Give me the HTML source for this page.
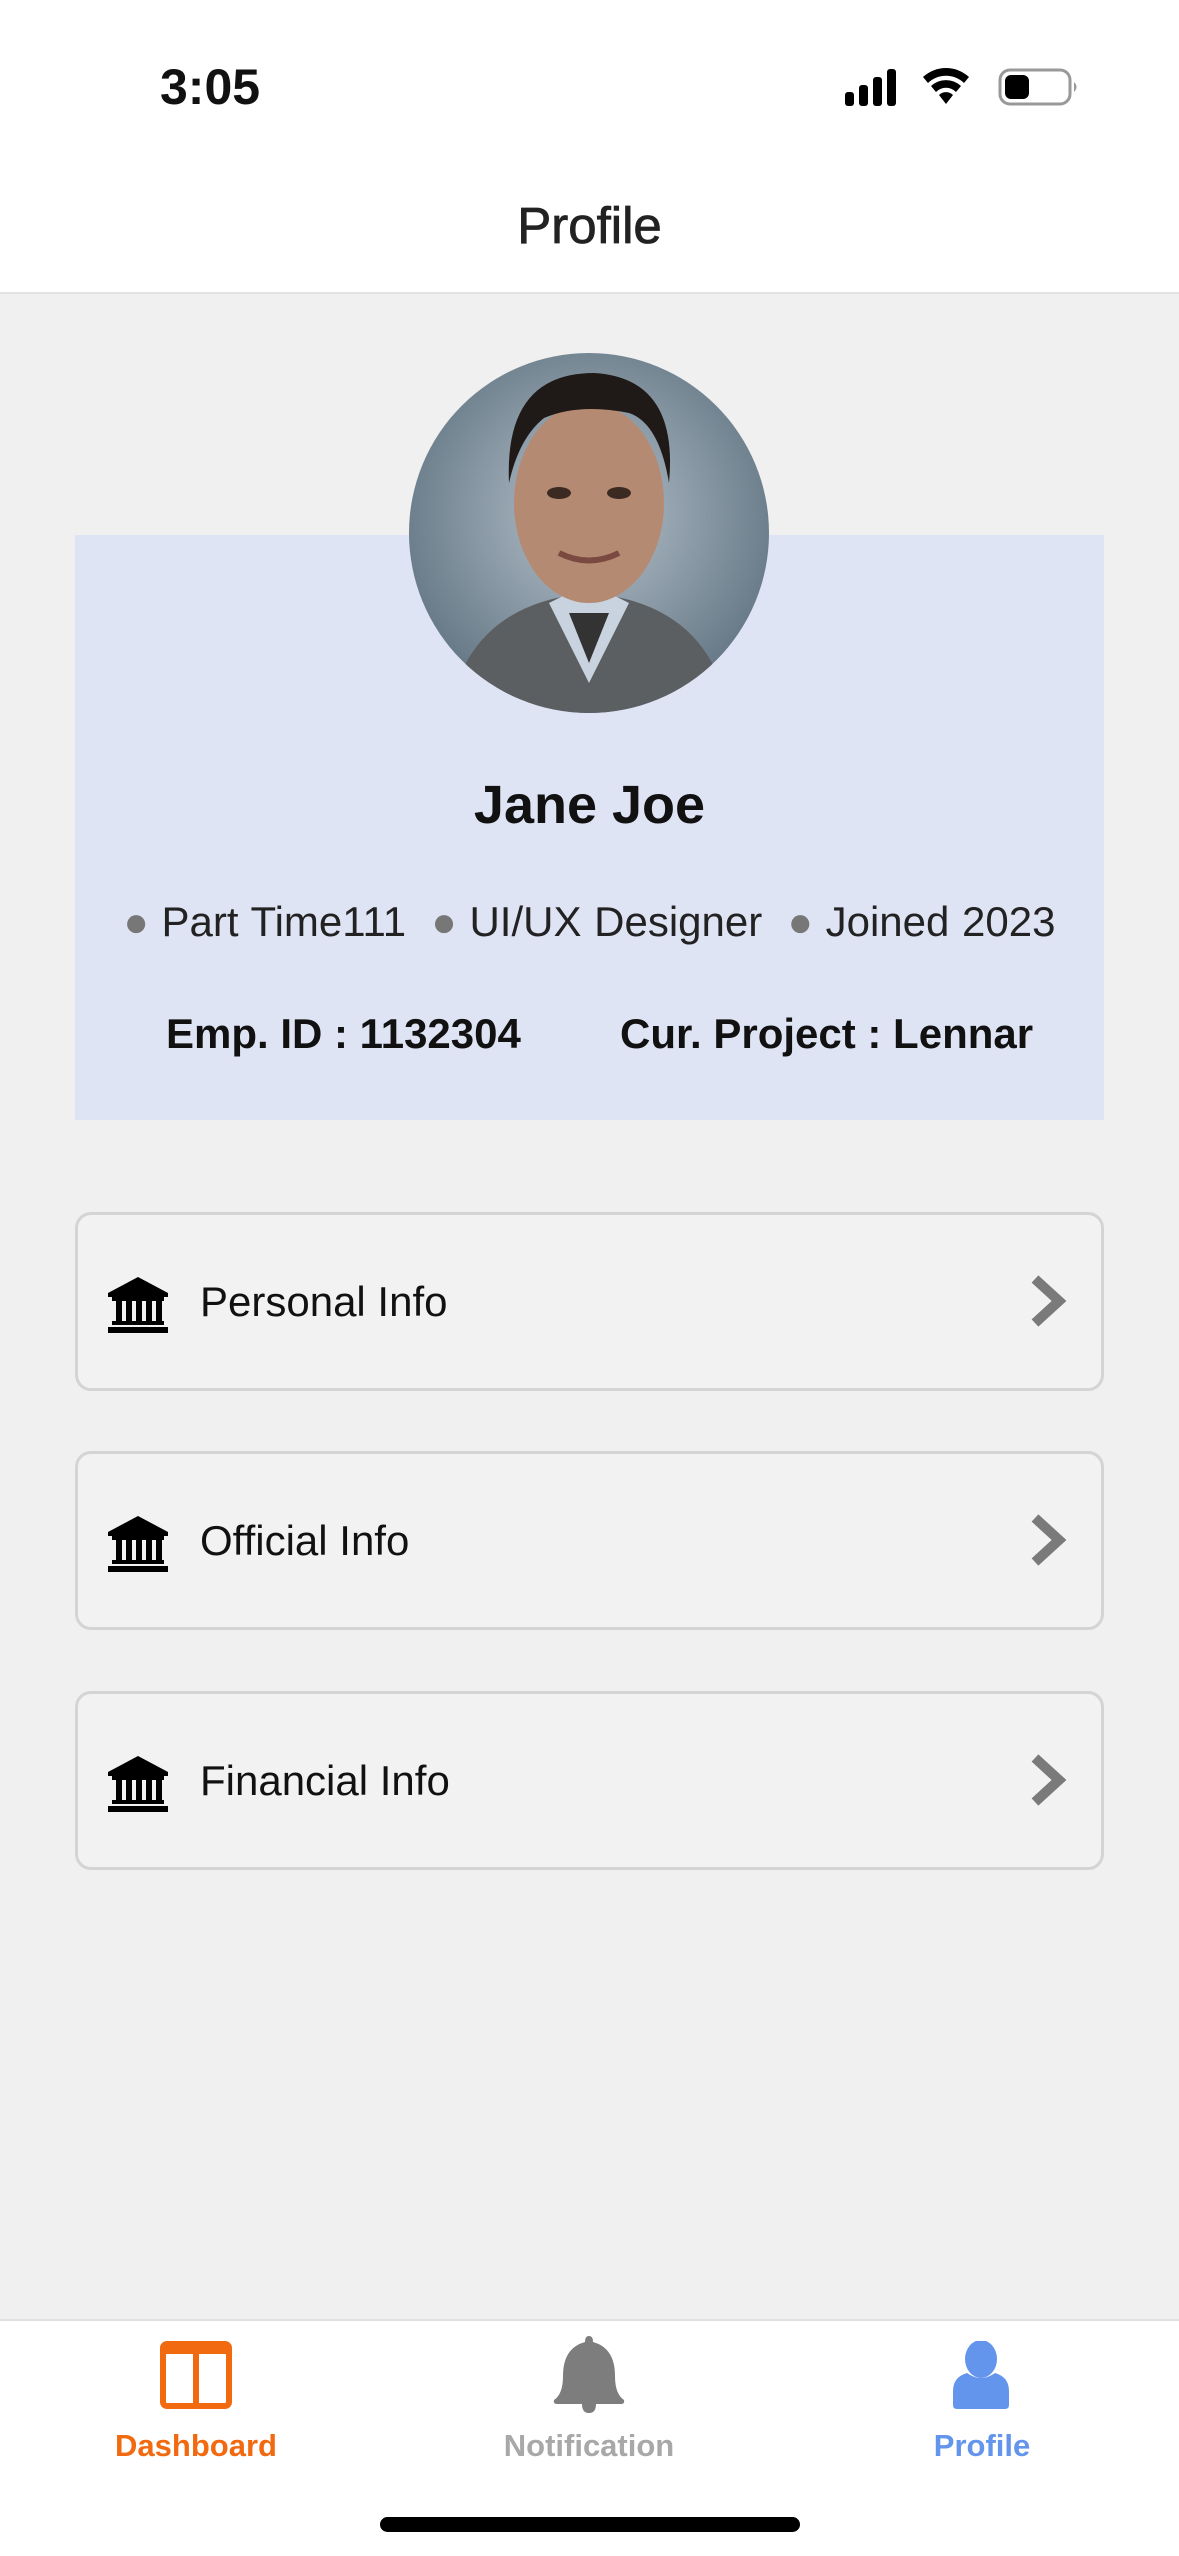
<!DOCTYPE html>
<html><head><meta charset="utf-8"><style>
*{margin:0;padding:0;box-sizing:border-box}
body{width:1179px;height:2556px;background:#f0f0f0;font-family:"Liberation Sans",sans-serif;position:relative;overflow:hidden;color:#111}
.abs{position:absolute}
.hdr{left:0;top:0;width:1179px;height:294px;background:#fff;border-bottom:2px solid #e2e2e2}
.card{left:75px;width:1029px;height:179px;border:3px solid #d4d4d4;border-radius:16px;background:#f2f2f2}
.card .t{position:absolute;left:122px;top:0;line-height:173px;font-size:42px;color:#111}
.card svg.i{position:absolute;left:30px;top:62px}
.card svg.c{position:absolute;left:950px;top:58px}
.tab{top:2319px;left:0;width:1179px;height:237px;background:#fff;border-top:2px solid #e0e0e0}
.lbl{position:absolute;top:2428px;font-size:31px;font-weight:bold;text-align:center;width:300px}
</style></head><body>
<div class="abs hdr"></div>
<div class="abs" style="left:160px;top:58px;font-size:50px;font-weight:bold;">3:05</div>
<svg class="abs" style="left:843px;top:68px" width="240" height="40" viewBox="0 0 240 40">
<rect x="2" y="24" width="9" height="14" rx="3"/><rect x="16" y="17" width="9" height="21" rx="3"/><rect x="30" y="9" width="9" height="29" rx="3"/><rect x="44" y="1" width="9" height="37" rx="3"/>
<path d="M80 9 a34 34 0 0 1 46 0 l-5 6 a26 26 0 0 0 -36 0z M88 18 a22 22 0 0 1 30 0 l-5 6 a14 14 0 0 0 -20 0z M96 27 a10 10 0 0 1 14 0 l-7 9z"/>
<rect x="157" y="2" width="70" height="34" rx="10" fill="none" stroke="#999" stroke-width="3"/>
<rect x="162" y="7" width="24" height="24" rx="6"/><path d="M231 14 q5 5 0 10z" fill="#999"/></svg>
<div class="abs" style="left:0;width:1179px;top:196px;text-align:center;font-size:51px;color:#222;-webkit-text-stroke:0.8px #222">Profile</div>

<div class="abs" style="left:75px;top:535px;width:1029px;height:585px;background:#dfe4f4"></div>
<svg class="abs" style="left:409px;top:353px" width="360" height="360" viewBox="0 0 360 360">
<defs><clipPath id="cp"><circle cx="180" cy="180" r="180"/></clipPath>
<radialGradient id="bg" cx="0.5" cy="0.45" r="0.6"><stop offset="0" stop-color="#b6c2cc"/><stop offset="1" stop-color="#5f7280"/></radialGradient></defs>
<g clip-path="url(#cp)"><rect width="360" height="360" fill="url(#bg)"/>
<path d="M40 360 q20 -110 140 -120 q120 10 140 120z" fill="#5c5f62"/>
<path d="M140 250 l40 80 l40 -80 l-20 -10 h-40z" fill="#c9d3e0"/>
<path d="M160 260 l20 50 l20 -50z" fill="#333"/>
<ellipse cx="180" cy="150" rx="75" ry="100" fill="#b58a72"/>
<path d="M100 130 q-5 -110 85 -110 q85 5 75 110 q-10 -60 -40 -70 q-50 -10 -85 5 q-25 20 -35 65z" fill="#1f1a17"/>
<ellipse cx="150" cy="140" rx="12" ry="6" fill="#3a2a22"/><ellipse cx="210" cy="140" rx="12" ry="6" fill="#3a2a22"/>
<path d="M150 200 q30 15 60 0" stroke="#7a4a40" stroke-width="6" fill="none"/></g></svg>
<div class="abs" style="left:0;width:1179px;top:774px;text-align:center;font-size:54px;font-weight:bold">Jane Joe</div>
<div class="abs" style="left:0;width:1179px;top:898px;text-align:center;font-size:42px;color:#222;word-spacing:1px">
<span style="color:#777">●</span> Part Time111 &nbsp;<span style="color:#777">●</span> UI/UX Designer &nbsp;<span style="color:#777">●</span> Joined 2023</div>
<div class="abs" style="left:166px;top:1010px;font-size:42px;font-weight:bold">Emp. ID : 1132304</div>
<div class="abs" style="left:620px;top:1010px;font-size:42px;font-weight:bold">Cur. Project : Lennar</div>

<div class="abs card" style="top:1212px"><svg class="i" width="60" height="56" viewBox="0 0 30 28"><path d="M15 0 L30 8 V10 H0 V8z"/><rect x="2" y="10" width="26" height="2"/><rect x="4" y="12" width="3" height="10"/><rect x="9" y="12" width="3" height="10"/><rect x="14" y="12" width="3" height="10"/><rect x="19" y="12" width="3" height="10"/><rect x="24" y="12" width="3" height="10"/><rect x="2" y="22" width="26" height="2"/><rect x="0" y="25" width="30" height="3"/></svg><div class="t">Personal Info</div><svg class="c" width="40" height="56" viewBox="0 0 40 56"><path d="M7 6 L31 28 L7 50" stroke="#7a7a7a" stroke-width="10" fill="none"/></svg></div>
<div class="abs card" style="top:1451px"><svg class="i" width="60" height="56" viewBox="0 0 30 28"><path d="M15 0 L30 8 V10 H0 V8z"/><rect x="2" y="10" width="26" height="2"/><rect x="4" y="12" width="3" height="10"/><rect x="9" y="12" width="3" height="10"/><rect x="14" y="12" width="3" height="10"/><rect x="19" y="12" width="3" height="10"/><rect x="24" y="12" width="3" height="10"/><rect x="2" y="22" width="26" height="2"/><rect x="0" y="25" width="30" height="3"/></svg><div class="t">Official Info</div><svg class="c" width="40" height="56" viewBox="0 0 40 56"><path d="M7 6 L31 28 L7 50" stroke="#7a7a7a" stroke-width="10" fill="none"/></svg></div>
<div class="abs card" style="top:1691px"><svg class="i" width="60" height="56" viewBox="0 0 30 28"><path d="M15 0 L30 8 V10 H0 V8z"/><rect x="2" y="10" width="26" height="2"/><rect x="4" y="12" width="3" height="10"/><rect x="9" y="12" width="3" height="10"/><rect x="14" y="12" width="3" height="10"/><rect x="19" y="12" width="3" height="10"/><rect x="24" y="12" width="3" height="10"/><rect x="2" y="22" width="26" height="2"/><rect x="0" y="25" width="30" height="3"/></svg><div class="t">Financial Info</div><svg class="c" width="40" height="56" viewBox="0 0 40 56"><path d="M7 6 L31 28 L7 50" stroke="#7a7a7a" stroke-width="10" fill="none"/></svg></div>

<div class="abs tab"></div>
<svg class="abs" style="left:160px;top:2341px" width="72" height="68" viewBox="0 0 72 68"><rect x="3" y="3" width="66" height="62" rx="4" fill="none" stroke="#f26a10" stroke-width="6"/><rect x="3" y="3" width="66" height="10" fill="#f26a10"/><rect x="33" y="3" width="6" height="62" fill="#f26a10"/></svg>
<svg class="abs" style="left:552px;top:2336px" width="74" height="78" viewBox="0 0 74 78"><path d="M37 0 q4 0 4 6 q22 6 22 34 q0 18 9 24 q1 4 -3 4 h-64 q-4 0 -3 -4 q9 -6 9 -24 q0 -28 22 -34 q0 -6 4 -6z" fill="#7d7d7d"/><path d="M30 68 q0 9 7 9 q7 0 7 -9z" fill="#7d7d7d"/></svg>
<svg class="abs" style="left:953px;top:2341px" width="56" height="68" viewBox="0 0 56 68"><ellipse cx="28" cy="18" rx="16" ry="19" fill="#6495ed"/><path d="M14 32 q14 10 28 0 q14 4 14 18 v14 q0 4 -4 4 h-48 q-4 0 -4 -4 v-14 q0 -14 14 -18z" fill="#6495ed"/></svg>
<div class="lbl" style="left:46px;color:#f26a10">Dashboard</div>
<div class="lbl" style="left:439px;color:#a8a8a8">Notification</div>
<div class="lbl" style="left:832px;color:#6495ed">Profile</div>
<div class="abs" style="left:380px;top:2517px;width:420px;height:15px;border-radius:8px;background:#000"></div>
</body></html>
